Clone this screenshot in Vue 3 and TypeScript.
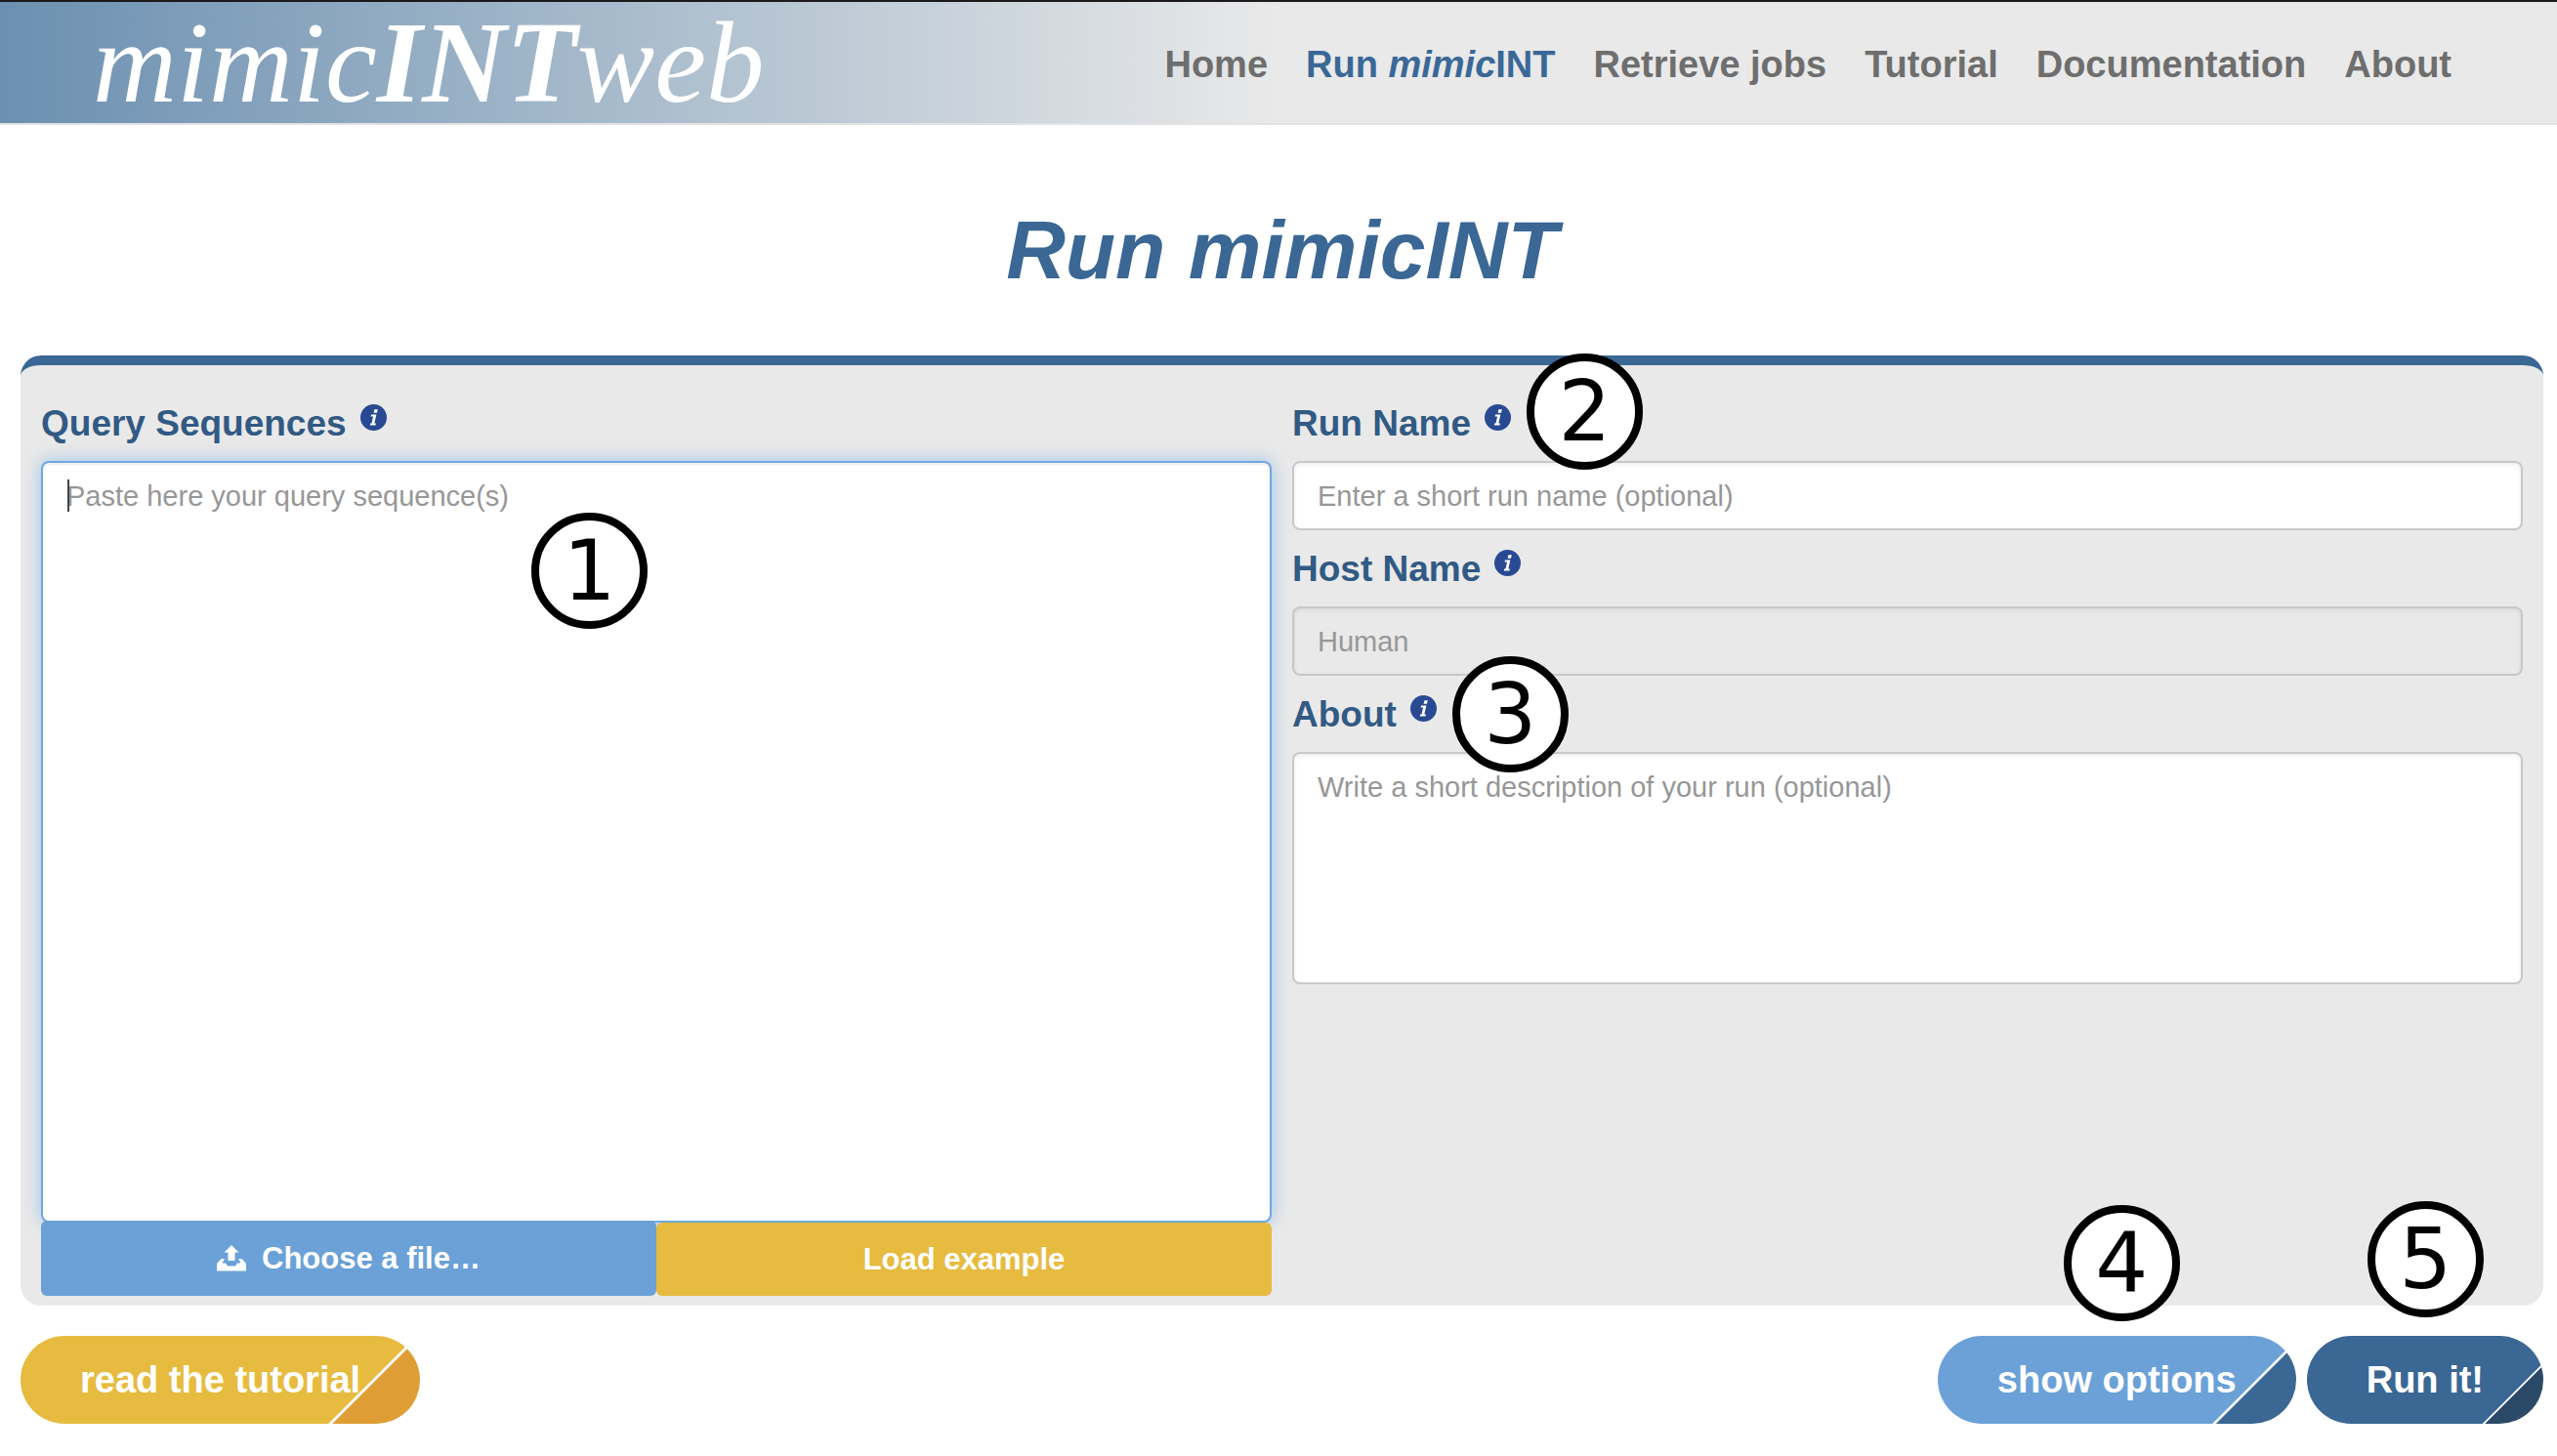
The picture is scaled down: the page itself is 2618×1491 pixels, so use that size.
<script setup lang="ts">
interface NavItem {
  label: string
  href: string
}

const navBefore: NavItem[] = [{ label: 'Home', href: '#home' }]
const navAfter: NavItem[] = [
  { label: 'Retrieve jobs', href: '#jobs' },
  { label: 'Tutorial', href: '#tutorial' },
  { label: 'Documentation', href: '#documentation' },
  { label: 'About', href: '#about' },
]
</script>

<template>
  <div class="page">
    <header class="topbar">
      <a class="logo" href="#home">mimic<b>INT</b>web</a>
      <nav class="nav">
        <a v-for="item in navBefore" :key="item.label" :href="item.href">{{ item.label }}</a>
        <a class="active" href="#run">Run <i>mimic</i>INT</a>
        <a v-for="item in navAfter" :key="item.label" :href="item.href">{{ item.label }}</a>
      </nav>
    </header>

    <main class="main">
      <h1 class="title">Run mimicINT</h1>

      <form class="panel" @submit.prevent>
        <div class="column">
          <div class="label-row">
            <label for="sequences">Query Sequences</label>
            <svg class="info" viewBox="0 0 27 27" aria-hidden="true">
              <circle cx="13.5" cy="13.5" r="13.5" fill="#294a93" />
              <path d="M14.4 5.2h3.4l-.8 3.6h-3.4zM11 10.6h5.4l-2.1 9h1.6l-.4 1.9H9.8l.4-1.9h1.3l1.6-7.1h-2.5z" fill="#fff" />
            </svg>
          </div>
          <div class="editor">
            <textarea id="sequences" class="field focused" placeholder="Paste here your query sequence(s)"></textarea>
            <span class="caret"></span>
            <span class="callout callout-1">1</span>
          </div>
          <div class="button-row">
            <button type="button" class="block blue">
              <svg class="upload" viewBox="0 0 30 27" aria-hidden="true">
                <path d="M15 0l7.500 7.500H18.500V16h-7V7.500H7.500zM4.500 14H8l-2.500 4.500H9l2 3h8l2-3h3.500L22 14h3.500l4.500 5v7.500H0V19z" fill="#fff" />
              </svg>
              <span>Choose a file…</span>
            </button>
            <button type="button" class="block yellow">Load example</button>
          </div>
        </div>

        <div class="column">
          <div class="label-row">
            <label for="run-name">Run Name</label>
            <svg class="info" viewBox="0 0 27 27" aria-hidden="true">
              <circle cx="13.5" cy="13.5" r="13.5" fill="#294a93" />
              <path d="M14.4 5.2h3.4l-.8 3.6h-3.4zM11 10.6h5.4l-2.1 9h1.6l-.4 1.9H9.8l.4-1.9h1.3l1.6-7.1h-2.5z" fill="#fff" />
            </svg>
            <span class="callout callout-2">2</span>
          </div>
          <input id="run-name" class="field" type="text" placeholder="Enter a short run name (optional)" />

          <div class="label-row">
            <label for="host-name">Host Name</label>
            <svg class="info" viewBox="0 0 27 27" aria-hidden="true">
              <circle cx="13.5" cy="13.5" r="13.5" fill="#294a93" />
              <path d="M14.4 5.2h3.4l-.8 3.6h-3.4zM11 10.6h5.4l-2.1 9h1.6l-.4 1.9H9.8l.4-1.9h1.3l1.6-7.1h-2.5z" fill="#fff" />
            </svg>
          </div>
          <input id="host-name" class="field" type="text" placeholder="Human" disabled />

          <div class="label-row">
            <label for="about">About</label>
            <svg class="info" viewBox="0 0 27 27" aria-hidden="true">
              <circle cx="13.5" cy="13.5" r="13.5" fill="#294a93" />
              <path d="M14.4 5.2h3.4l-.8 3.6h-3.4zM11 10.6h5.4l-2.1 9h1.6l-.4 1.9H9.8l.4-1.9h1.3l1.6-7.1h-2.5z" fill="#fff" />
            </svg>
            <span class="callout callout-3">3</span>
          </div>
          <textarea id="about" class="field about" placeholder="Write a short description of your run (optional)"></textarea>
        </div>
      </form>

      <div class="actions">
        <button type="button" class="pill tutorial">read the tutorial</button>
        <div class="right">
          <div class="anchor">
            <button type="button" class="pill options">show options</button>
            <span class="callout callout-4">4</span>
          </div>
          <div class="anchor">
            <button type="button" class="pill run">Run it!</button>
            <span class="callout callout-5">5</span>
          </div>
        </div>
      </div>
    </main>
  </div>
</template>

<style>
body {
  background: #fff;
}
</style>

<style scoped>
.page {
  font-family: "Liberation Sans", Arial, sans-serif;
}

.page * {
  box-sizing: border-box;
}

.topbar {
  display: flex;
  justify-content: space-between;
  border-top: 2px solid #1c191b;
  border-bottom: 2px solid #e2e2e2;
  background: linear-gradient(to right, #6b90b1, #e9e9e9 50%);
}

.logo {
  padding: 0 0 0 95px;
  color: #fff;
  font: italic 119px/124px "Liberation Serif", "Times New Roman", serif;
  text-decoration: none;
}

.nav {
  display: flex;
  align-items: center;
  gap: 39px;
  padding: 4px 108px 0 0;
}

.nav a {
  color: #6e6e6e;
  font-size: 38px;
  font-weight: bold;
  text-decoration: none;
  white-space: nowrap;
}

.nav a.active {
  color: #3a6897;
}

.main {
  padding: 78px 14px 32px 21px;
}

.title {
  margin: 0 0 58px;
  color: #3a6794;
  font-size: 84px;
  font-style: italic;
  line-height: 100px;
  text-align: center;
}

.panel {
  display: grid;
  grid-template-columns: 1fr 1fr;
  gap: 21px;
  padding: 36px 21px 10px;
  border-top: 10px solid #3a6794;
  border-radius: 21px;
  background: #e9e9e9;
}

.column {
  display: flex;
  flex-direction: column;
  min-width: 0;
}

.label-row {
  position: relative;
  display: flex;
  align-self: flex-start;
  gap: 14px;
  margin-bottom: 14px;
  color: #315a84;
  font-size: 37px;
  font-weight: bold;
  line-height: 48px;
}

.info {
  width: 27px;
  height: 27px;
  margin-top: 4px;
}

.field {
  display: block;
  width: 100%;
  height: 71px;
  margin: 0 0 16px;
  padding: 18px 24px 16px;
  border: 2px solid #c8c8c8;
  border-radius: 8px;
  background: #fff;
  box-shadow: inset 0 2px 4px rgba(0, 0, 0, 0.08);
  font-family: inherit;
  font-size: 29px;
  line-height: 33px;
  outline: none;
  resize: none;
}

.field::placeholder {
  color: #979797;
  opacity: 1;
}

.field:disabled {
  background: #e9e9e9;
}

.editor {
  position: relative;
}

.field.focused {
  height: 780px;
  margin: 0;
  border-color: #70a7e2;
  box-shadow: inset 0 2px 2px rgba(0, 0, 0, 0.07), 0 0 18px rgba(102, 170, 233, 0.6);
}

.field.about {
  height: 238px;
  margin: 0;
}

.caret {
  position: absolute;
  top: 19px;
  left: 27px;
  width: 2px;
  height: 33px;
  background: #444;
}

.button-row {
  position: relative;
  display: flex;
  align-items: flex-end;
}

.block {
  display: flex;
  flex: 1;
  align-items: center;
  justify-content: center;
  gap: 16px;
  height: 75px;
  padding: 0;
  border: 0;
  border-radius: 6px;
  color: #fff;
  font: bold 31px/36px "Liberation Sans", Arial, sans-serif;
}

.upload {
  width: 30px;
  height: 27px;
}

.blue {
  height: 77px;
  margin-top: -2px;
  background: #6ba1d7;
}

.yellow {
  background: #e6bb3f;
}

.actions {
  display: flex;
  justify-content: space-between;
  margin-top: 31px;
}

.right {
  display: flex;
  gap: 11px;
}

.anchor {
  position: relative;
}

.pill {
  height: 90px;
  padding: 0 61px;
  border: 0;
  border-radius: 45px;
  color: #fff;
  font: bold 38px/44px "Liberation Sans", Arial, sans-serif;
}

.tutorial {
  background: linear-gradient(135deg, #e6bb3f 81%, #fff 81.4%, #fff 81.8%, #df9e35 82.2%);
}

.options {
  background: linear-gradient(135deg, #6ba1d7 81%, #fff 81.4%, #fff 81.8%, #3a6794 82.2%);
}

.run {
  background: linear-gradient(135deg, #3a6794 81%, #fff 81.4%, #fff 81.8%, #2b4a68 82.2%);
}

.callout {
  position: absolute;
  z-index: 1;
  width: 119px;
  height: 119px;
  border: 8px solid #000;
  border-radius: 50%;
  background: #fff;
  color: #000;
  font: 85px/104px "DejaVu Sans", Verdana, sans-serif;
  text-align: center;
}

.callout-1 {
  top: 53px;
  left: 502px;
}

.callout-2 {
  top: -48px;
  left: calc(100% + 16px);
}

.callout-3 {
  top: -36px;
  left: calc(100% + 16px);
}

.callout-4 {
  top: -134px;
  left: 129px;
}

.callout-5 {
  top: -138px;
  left: 62px;
}
</style>
